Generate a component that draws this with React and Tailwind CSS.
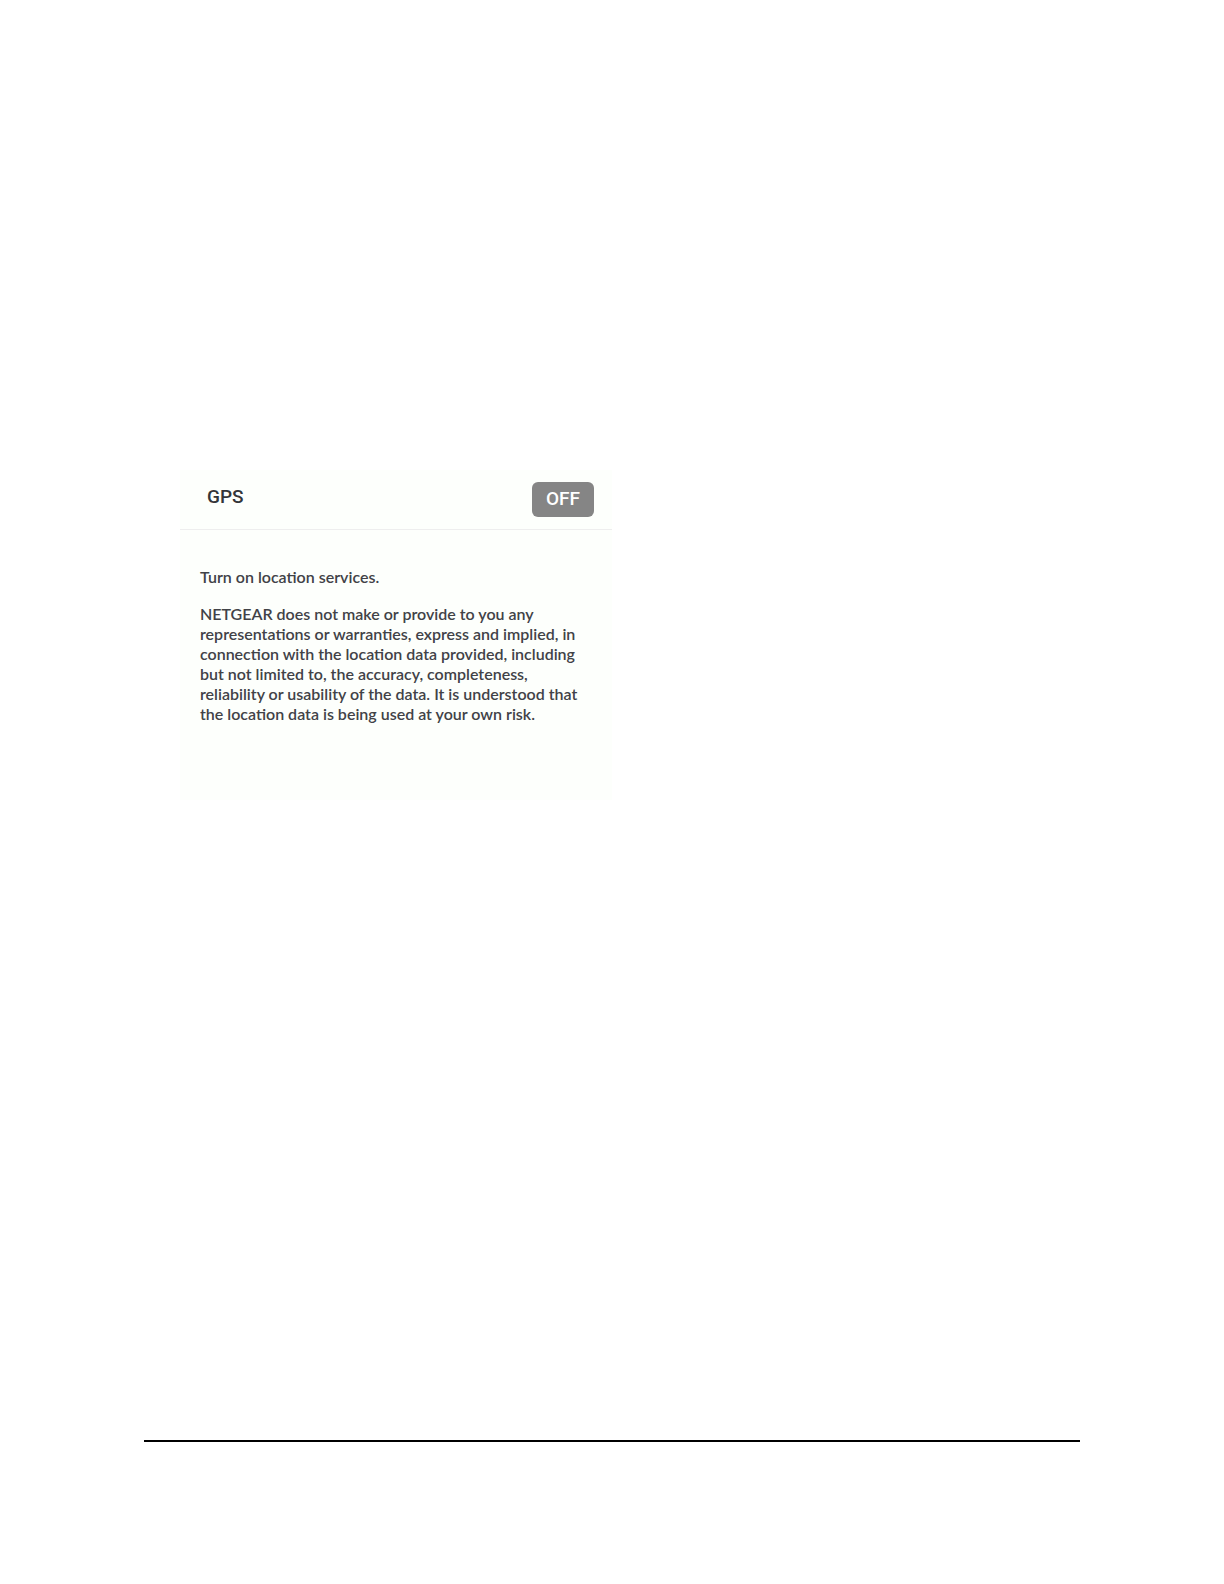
import { useState } from 'react';

export default function App() {
  const [enabled, setEnabled] = useState(false);

  return (
    <div className="flex min-h-screen flex-col bg-white px-36 pb-[142px]">
      <main className="flex-1 px-9 pt-[470px]">
        <section className="w-full max-w-[432px] bg-[#fdfffc] pb-[76px]">
          <header className="flex items-start justify-between border-b border-[#eeeeee] pt-3 pr-[18px] pb-3 pl-[27px] font-['Roboto',sans-serif] text-[19px] font-medium">
            <h1 className="leading-[30px] text-[#333539]">GPS</h1>
            <button
              type="button"
              aria-label="GPS"
              aria-pressed={enabled}
              onClick={() => setEnabled(!enabled)}
              className="h-[35px] w-[62px] rounded-md bg-[#858585] text-white"
            >
              {enabled ? 'ON' : 'OFF'}
            </button>
          </header>
          <div className="space-y-[17px] px-5 pt-[37px] font-['Lato',sans-serif] text-[16px] leading-5 font-semibold text-[#414247]">
            <p>Turn on location services.</p>
            <p>
              NETGEAR does not make or provide to you any
              <br />
              representations or warranties, express and implied, in
              <br />
              connection with the location data provided, including
              <br />
              but not limited to, the accuracy, completeness,
              <br />
              reliability or usability of the data. It is understood that
              <br />
              the location data is being used at your own risk.
            </p>
          </div>
        </section>
      </main>
      <hr className="border-t-2 border-black" />
    </div>
  );
}
